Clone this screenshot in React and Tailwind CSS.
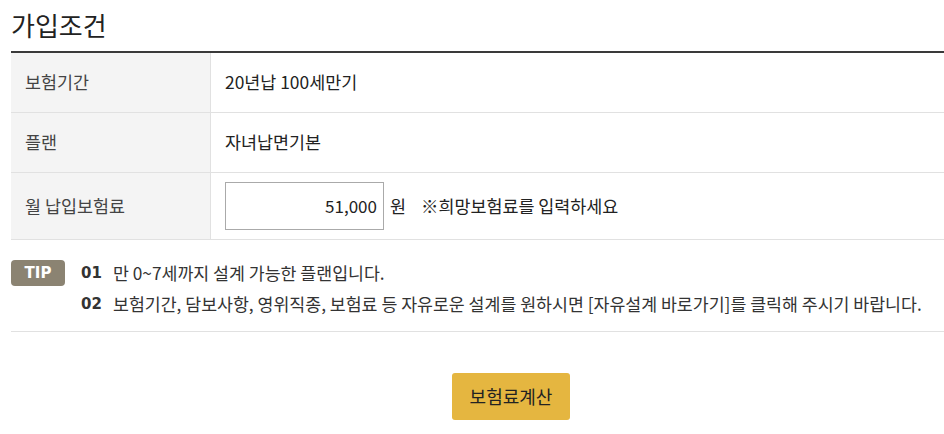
import React from 'react';

const rows = [
  { label: '보험기간', value: '20년납 100세만기' },
  { label: '플랜', value: '자녀납면기본' },
];

const bold = { fontFamily: '"DejaVu Sans", Verdana, sans-serif' };

export default function App() {
  return (
    <div
      className="w-[944px] h-[434px] bg-white text-[#333] pl-[11px]"
      style={{ fontFamily: '"Noto Sans CJK KR", "Noto Sans", sans-serif' }}
    >
      <h2 className="text-[26px] leading-none pt-[12px] pb-[13px] text-[#222]">가입조건</h2>

      <div className="border-t-2 border-[#3a3a3a]">
        {rows.map((r) => (
          <div key={r.label} className="flex h-[60px] border-b border-[#e1e1e1]">
            <div className="w-[200px] bg-[#f4f4f4] border-r border-[#e1e1e1] flex items-center pl-[14px] text-[17.4px] text-[#444]">
              {r.label}
            </div>
            <div className="flex-1 flex items-center pl-[14px] text-[17.4px] text-[#222]">{r.value}</div>
          </div>
        ))}
        <div className="flex h-[67px] border-b border-[#e1e1e1]">
          <div className="w-[200px] bg-[#f4f4f4] border-r border-[#e1e1e1] flex items-center pl-[14px] text-[17.4px] text-[#444]">
            월 납입보험료
          </div>
          <div className="flex-1 flex items-center pl-[14px] text-[17.4px] text-[#222]">
            <div className="w-[159px] h-[48px] border border-[#aaa] flex items-center justify-end pr-[6px] text-[17px]">
              51,000
            </div>
            <span className="ml-[6px]">원</span>
            <span className="ml-[15px]">※희망보험료를 입력하세요</span>
          </div>
        </div>
      </div>

      <div className="flex pt-[20px] pb-[14px] border-b border-[#e1e1e1]">
        <div
          className="w-[54px] h-[26px] bg-[#8b8372] rounded-[4px] text-white font-bold text-[15px] flex items-center justify-center shrink-0"
          style={bold}
        >
          TIP
        </div>
        <div className="ml-[16px] flex flex-col gap-[5px] text-[17.3px] leading-[26px] text-[#333]">
          <div className="flex">
            <span className="font-bold w-[32px] text-[15px] text-[#333]" style={bold}>01</span>
            <span>만 0~7세까지 설계 가능한 플랜입니다.</span>
          </div>
          <div className="flex">
            <span className="font-bold w-[32px] text-[15px] text-[#333]" style={bold}>02</span>
            <span>보험기간, 담보사항, 영위직종, 보험료 등 자유로운 설계를 원하시면 [자유설계 바로가기]를 클릭해 주시기 바랍니다.</span>
          </div>
        </div>
      </div>

      <div className="flex pt-[41px] pl-[441px]">
        <button className="w-[118px] h-[47px] bg-[#e5b640] rounded-[3px] text-[18px] text-[#222]">
          보험료계산
        </button>
      </div>
    </div>
  );
}
